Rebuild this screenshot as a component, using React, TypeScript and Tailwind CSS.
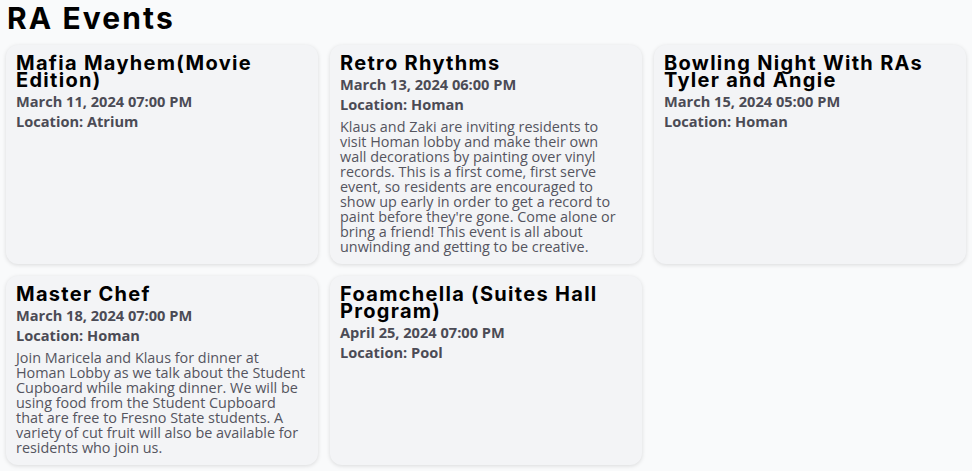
import React from 'react';

interface RaEvent {
  title: string;
  date: string;
  location: string;
  // description kept as the lines it wraps to on the card
  description?: string[];
}

const EVENTS: RaEvent[] = [
  {
    title: 'Mafia Mayhem(Movie Edition)',
    date: 'March 11, 2024 07:00 PM',
    location: 'Atrium',
  },
  {
    title: 'Retro Rhythms',
    date: 'March 13, 2024 06:00 PM',
    location: 'Homan',
    description: [
      'Klaus and Zaki are inviting residents to',
      'visit Homan lobby and make their own',
      'wall decorations by painting over vinyl',
      'records. This is a first come, first serve',
      'event, so residents are encouraged to',
      'show up early in order to get a record to',
      "paint before they're gone. Come alone or",
      'bring a friend! This event is all about',
      'unwinding and getting to be creative.',
    ],
  },
  {
    title: 'Bowling Night With RAs Tyler and Angie',
    date: 'March 15, 2024 05:00 PM',
    location: 'Homan',
  },
  {
    title: 'Master Chef',
    date: 'March 18, 2024 07:00 PM',
    location: 'Homan',
    description: [
      'Join Maricela and Klaus for dinner at',
      'Homan Lobby as we talk about the Student',
      'Cupboard while making dinner. We will be',
      'using food from the Student Cupboard',
      'that are free to Fresno State students. A',
      'variety of cut fruit will also be available for',
      'residents who join us.',
    ],
  },
  {
    title: 'Foamchella (Suites Hall Program)',
    date: 'April 25, 2024 07:00 PM',
    location: 'Pool',
  },
];

const EventCard: React.FC<{ event: RaEvent }> = ({ event }) => (
  <div className="bg-[#f3f4f6] rounded-xl shadow-[0_1px_4px_rgba(0,0,0,0.13)] px-2.5 pt-2.5 pb-2.5">
    <h2 className="font-['Inter',sans-serif] font-bold text-[20px] leading-[17px] tracking-[0.065em] text-black">
      {event.title}
    </h2>
    <p className="font-['Open_Sans',sans-serif] font-bold text-[14.6px] leading-[20px] text-[#4b4b55] mt-[2px]">
      {event.date}
    </p>
    <p className="font-['Open_Sans',sans-serif] font-bold text-[14.6px] leading-[20px] text-[#4b4b55]">
      Location: {event.location}
    </p>
    {event.description && (
      <p className="font-['Open_Sans',sans-serif] text-[14.4px] leading-[15px] text-[#55555f] mt-[5px]">
        {event.description.map((line) => (
          <span key={line} className="block whitespace-nowrap">
            {line}
          </span>
        ))}
      </p>
    )}
  </div>
);

export default function App() {
  return (
    <div className="min-h-screen bg-[#f9fafb] px-1.5 pb-2">
      <h1 className="font-['Inter',sans-serif] font-bold text-[30px] leading-[36px] tracking-[0.07em] text-black pl-px mb-[9px]">
        RA Events
      </h1>
      <div className="grid grid-cols-3 gap-3">
        {EVENTS.map((ev) => (
          <EventCard key={ev.title} event={ev} />
        ))}
      </div>
    </div>
  );
}
